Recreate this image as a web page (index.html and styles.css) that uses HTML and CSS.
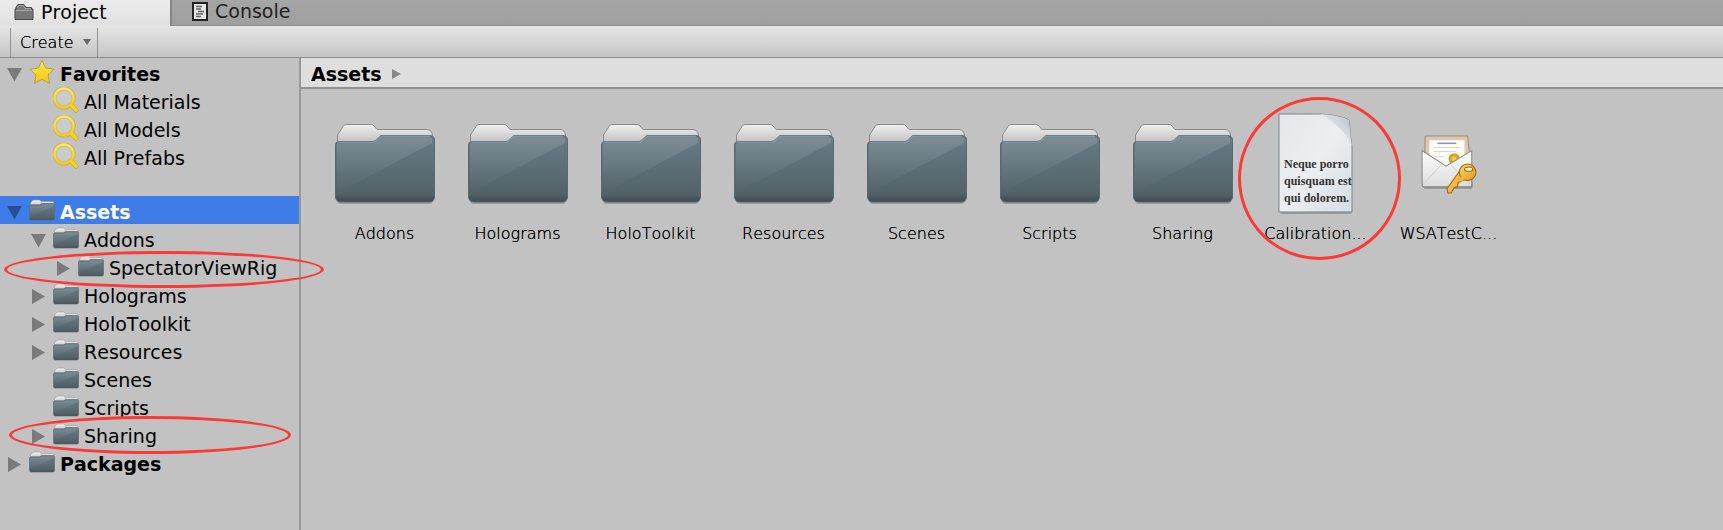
FILE: index.html
```html
<!DOCTYPE html>
<html lang="en">
<head>
<meta charset="utf-8">
<title>Project</title>
<link rel="stylesheet" href="styles.css">
</head>
<body>
<svg class="defs" aria-hidden="true">
  <defs>
    <linearGradient id="front" x1="0" y1="0" x2="0" y2="1"><stop offset="0" stop-color="#6c7d85"/><stop offset=".2" stop-color="#637680"/><stop offset=".88" stop-color="#536268"/><stop offset="1" stop-color="#3d4a51"/></linearGradient>
    <linearGradient id="back" x1="0" y1="0" x2="0" y2="1"><stop offset="0" stop-color="#f0f0f0"/><stop offset="1" stop-color="#b4b4b4"/></linearGradient>
    <linearGradient id="shine" x1="0" y1="0" x2="0" y2="1"><stop offset="0" stop-color="#fff" stop-opacity=".13"/><stop offset="1" stop-color="#fff" stop-opacity="0"/></linearGradient>
    <linearGradient id="gold" x1="0" y1="0" x2="0" y2="1"><stop offset="0" stop-color="#ffe94a"/><stop offset="1" stop-color="#fac80a"/></linearGradient>
    <linearGradient id="paper" x1="0" y1="0" x2="1" y2="1"><stop offset="0" stop-color="#e4e7ea"/><stop offset=".5" stop-color="#eceff1"/><stop offset="1" stop-color="#d5dce2"/></linearGradient>
    <linearGradient id="curl" x1="1" y1="0" x2=".35" y2=".65"><stop offset="0" stop-color="#b3bec6"/><stop offset="1" stop-color="#e9edf0"/></linearGradient>
    <linearGradient id="envelope" x1="0" y1="0" x2="0" y2="1"><stop offset="0" stop-color="#fff"/><stop offset="1" stop-color="#dcdcdc"/></linearGradient>
    <linearGradient id="brass" x1="0" y1="0" x2="1" y2="1"><stop offset="0" stop-color="#ffd768"/><stop offset="1" stop-color="#e59a1c"/></linearGradient>
    <symbol id="folder" viewBox="0 0 102 82">
      <rect x="3" y="73" width="96" height="8" rx="4" fill="#000" opacity=".18"/>
      <path d="M3.500 24V12L9 3.500Q10 1.500 12 1.500H37Q39 1.500 40 3L43 6.500H93Q98.500 7 98.500 13V24Z" fill="url(#back)" stroke="#8b8b8b"/>
      <path d="M1.500 22Q1.500 18.500 5 18.500H39Q41 18.500 43 16L45 14Q46 12.500 48 12.500H96Q100.500 13 100.500 17V74Q100 79 95.500 79H7Q2 79 1.500 74Z" fill="url(#front)" stroke="#5b686e"/>
      <path d="M4 19.500H40L46 14Q47 13.500 48 13.500H96" fill="none" stroke="#8195a0" stroke-width="2"/>
      <path d="M3 21H40L47 15H98V20L3 70Z" fill="url(#shine)"/>
    </symbol>
    <symbol id="folder-small" viewBox="0 0 26 22">
      <path d="M1.500 10V4L3.500 1.500Q4 1 5 1H10.500Q11.500 1 12 2.500H23.500Q25 2.500 25 4V10Z" fill="url(#back)" stroke="#999" stroke-width=".6"/>
      <path d="M.5 7Q.5 5.800 2 5.800H10.500L12.500 4.500H24Q25.500 4.500 25.500 6V19.500Q25.500 21 24 21H2Q.5 21 .5 19.500Z" fill="url(#front)" stroke="#606d73" stroke-width=".7"/>
      <path d="M1 7H11L13 5.500H25V7L1 18Z" fill="url(#shine)"/>
    </symbol>
    <symbol id="magnifier" viewBox="0 0 26 26">
      <path d="M18 18L23 23" stroke="#8c8c6a" stroke-width="5" stroke-linecap="round" opacity=".6"/>
      <circle cx="11" cy="11" r="9.500" fill="none" stroke="#9a905a" stroke-width="4" opacity=".5"/>
      <circle cx="11" cy="11" r="9.500" fill="#fff" fill-opacity=".15" stroke="url(#gold)" stroke-width="2.600"/>
      <path d="M18 18L23 23" stroke="#fbcf12" stroke-width="4" stroke-linecap="round"/>
    </symbol>
    <symbol id="open" viewBox="0 0 15 15"><path d="M0 1H15L7.500 14.500Z" fill="currentColor"/></symbol>
    <symbol id="closed" viewBox="0 0 15 15"><path d="M1 0L14 7.500L1 15Z" fill="currentColor"/></symbol>
  </defs>
</svg>

<div class="window">
  <div class="tabs" role="tablist">
    <button class="tab tab-active" role="tab" aria-selected="true">
      <svg class="tab-icon-folder" viewBox="0 0 20 18"><path d="M1 16.500V6H2V4L4 1.500H10L12 4.500H17.500V6H19V16.500Z" fill="#777" stroke="#4a4a4a"/><path d="M3 5L5 2.500H9.500L11 5.500H17M2 7.500H18" fill="none" stroke="#a8a8a8"/></svg>
      Project
    </button>
    <button class="tab" role="tab" aria-selected="false">
      <svg class="tab-icon-page" viewBox="0 0 16 19"><rect x="1" y="1" width="14" height="17" fill="#e6e6e6" stroke="#222" stroke-width="2"/><path d="M4 4.500H10M4 7H9M6 9.500H12M4 12H11M4 14.500H9" stroke="#666" stroke-width="1.300"/></svg>
      Console
    </button>
  </div>
  <div class="toolbar">
    <button class="create">Create <svg class="caret" viewBox="0 0 8 6"><path d="M0 0H8L4 6Z" fill="#666"/></svg></button>
  </div>
  <div class="body">
    <nav class="sidebar" aria-label="Folders">
      <ul class="tree">
        <li>
          <div class="row root"><button class="toggle" aria-label="Collapse Favorites"><svg><use href="#open"/></svg></button>
            <svg class="icon star" viewBox="0 0 26 26"><path d="M13 1.500L16.600 9L25 10.200L19 16L20.500 24.300L13 20.300L5.500 24.300L7 16L1 10.200L9.400 9Z" fill="url(#gold)" stroke="#b0a150" stroke-width="1"/></svg>Favorites</div>
          <ul>
            <li class="row"><span class="toggle"></span><svg class="icon lens"><use href="#magnifier"/></svg>All Materials</li>
            <li class="row"><span class="toggle"></span><svg class="icon lens"><use href="#magnifier"/></svg>All Models</li>
            <li class="row"><span class="toggle"></span><svg class="icon lens"><use href="#magnifier"/></svg>All Prefabs</li>
          </ul>
        </li>
        <li class="project">
          <div class="row root selected"><button class="toggle" aria-label="Collapse Assets"><svg><use href="#open"/></svg></button><svg class="icon"><use href="#folder-small"/></svg>Assets</div>
          <ul>
            <li>
              <div class="row"><button class="toggle" aria-label="Collapse Addons"><svg><use href="#open"/></svg></button><svg class="icon"><use href="#folder-small"/></svg>Addons</div>
              <ul>
                <li class="row"><button class="toggle" aria-label="Expand SpectatorViewRig"><svg><use href="#closed"/></svg></button><svg class="icon"><use href="#folder-small"/></svg>SpectatorViewRig<span class="mark mark-rig"></span></li>
              </ul>
            </li>
            <li class="row"><button class="toggle" aria-label="Expand Holograms"><svg><use href="#closed"/></svg></button><svg class="icon"><use href="#folder-small"/></svg>Holograms</li>
            <li class="row"><button class="toggle" aria-label="Expand HoloToolkit"><svg><use href="#closed"/></svg></button><svg class="icon"><use href="#folder-small"/></svg>HoloToolkit</li>
            <li class="row"><button class="toggle" aria-label="Expand Resources"><svg><use href="#closed"/></svg></button><svg class="icon"><use href="#folder-small"/></svg>Resources</li>
            <li class="row"><span class="toggle"></span><svg class="icon"><use href="#folder-small"/></svg>Scenes</li>
            <li class="row"><span class="toggle"></span><svg class="icon"><use href="#folder-small"/></svg>Scripts</li>
            <li class="row"><button class="toggle" aria-label="Expand Sharing"><svg><use href="#closed"/></svg></button><svg class="icon"><use href="#folder-small"/></svg>Sharing<span class="mark mark-sharing"></span></li>
          </ul>
          <div class="row root"><button class="toggle" aria-label="Expand Packages"><svg><use href="#closed"/></svg></button><svg class="icon"><use href="#folder-small"/></svg>Packages</div>
        </li>
      </ul>
    </nav>
    <main class="content">
      <div class="breadcrumb">Assets <svg class="crumb" viewBox="0 0 9 10"><path d="M0 0L9 5L0 10Z" fill="#888"/></svg></div>
      <ul class="grid">
        <li class="item"><span class="art"><svg class="folder"><use href="#folder"/></svg></span>Addons</li>
        <li class="item"><span class="art"><svg class="folder"><use href="#folder"/></svg></span>Holograms</li>
        <li class="item"><span class="art"><svg class="folder"><use href="#folder"/></svg></span>HoloToolkit</li>
        <li class="item"><span class="art"><svg class="folder"><use href="#folder"/></svg></span>Resources</li>
        <li class="item"><span class="art"><svg class="folder"><use href="#folder"/></svg></span>Scenes</li>
        <li class="item"><span class="art"><svg class="folder"><use href="#folder"/></svg></span>Scripts</li>
        <li class="item"><span class="art"><svg class="folder"><use href="#folder"/></svg></span>Sharing</li>
        <li class="item"><span class="art"><svg class="page" viewBox="0 0 76 102">
          <rect x="2" y="95" width="72" height="6" rx="2" opacity=".2"/>
          <path d="M1 1H42Q62 2 71 7Q72 20 74 34V99H1Z" fill="url(#paper)" stroke="#7d858a"/>
          <path d="M42 1Q62 2 71 7Q72 20 74 34Q68 16 42 1Z" fill="url(#curl)"/>
          <g class="page-text"><text x="6" y="55">Neque porro</text><text x="6" y="72">quisquam est</text><text x="6" y="89">qui dolorem.</text></g>
        </svg></span>Calibration...<span class="mark mark-file"></span></li>
        <li class="item"><span class="art"><svg class="cert" viewBox="0 0 56 58">
          <rect x="3" y="45" width="48" height="8" rx="3" opacity=".25"/>
          <path d="M5 2H46L48 20V40H4Z" fill="#d9c9b4" stroke="#9b8c7a"/>
          <path d="M9 6H43V40H9Z" fill="#fdfcf6"/>
          <path d="M17 9H35" stroke="#8795c4" stroke-width="1.500"/><path d="M13 13H39M13 17H35M14 22H23" stroke="#d8d8d8"/>
          <circle cx="33" cy="24" r="4" fill="#efcd52" stroke="#d3a51f" stroke-width="3"/>
          <path d="M2 16L25 31L50 16V49Q50 51 48 51H4Q2 51 2 49Z" fill="url(#envelope)" stroke="#8a8a8a"/>
          <path d="M3 49L21 29M49 49L29 29" stroke="#d0d0d0" fill="none"/>
          <path d="M38 36L26 53L27 57H30L33 52L36 51L37 47L43 44Z" fill="url(#brass)" stroke="#9c6513"/>
          <circle cx="46" cy="37" r="8" fill="url(#brass)" stroke="#9c6513"/><path d="M39 41L44 43L40 46L36 45Z" fill="#f2b442"/><ellipse cx="47" cy="34" rx="4" ry="2" fill="#fff1cd" stroke="#9c6513"/>
        </svg></span>WSATestC...</li>
      </ul>
    </main>
  </div>
</div>
</body>
</html>
```
FILE: styles.css
```css
* { box-sizing: border-box; }
body {
  margin: 0;
  background: #c2c2c2;
  color: #000;
  font-family: "DejaVu Sans", Verdana, sans-serif;
  font-size: 19px;
  font-kerning: none;
}
ul { list-style: none; margin: 0; padding: 0; }
button { font: inherit; font-kerning: none; color: inherit; background: none; border: 0; padding: 0; }
.defs { position: absolute; width: 0; height: 0; }
.window { min-height: 100vh; display: flex; flex-direction: column; }

.tabs { display: flex; height: 26px; background: linear-gradient(#a5a5a5, #9f9f9f); border-bottom: 1px solid #8f8f8f; }
.tab { display: flex; align-items: center; padding: 0 20px 3px; color: #222; }
.tab-active {
  width: 172px;
  height: 26px;
  padding: 0 0 3px 14px;
  color: #000;
  background: linear-gradient(#ececec, #e0e0e0);
  border-right: 2px solid #868686;
}
.tab svg { flex: none; margin-right: 7px; }
.tab-icon-folder { width: 20px; height: 18px; }
.tab-icon-page { width: 16px; height: 19px; }

.toolbar {
  display: flex;
  height: 32px;
  padding: 2px 10px 0;
  background: linear-gradient(#e6e6e6, #c4c4c4);
  border-bottom: 1px solid #8c8c8c;
}
.create {
  display: flex;
  align-items: center;
  gap: 9px;
  padding: 0 6px 0 9px;
  font-size: 16px;
  font-weight: 200;
  text-shadow: 0 0 0 #000;
  border: solid #939393;
  border-width: 0 1px;
}
.caret { width: 8px; height: 6px; margin-bottom: 2px; }

.body { display: flex; flex: 1; }
.sidebar { flex: none; width: 301px; padding-top: 2px; border-right: 2px solid #999; }
.row { position: relative; display: flex; align-items: center; height: 28px; padding-left: 31px; }
.root { padding-left: 7px; font-weight: 700; }
.tree ul ul .row { padding-left: 56px; }
.project { margin-top: 24px; }
.project .row { padding-top: 4px; }
.selected { background: #3e7de7; color: #fff; }
.toggle { display: flex; width: 15px; height: 15px; margin-right: 7px; color: #7a7a7a; }
.selected .toggle { color: #284f91; }
.toggle svg { width: 15px; height: 15px; }
.icon { width: 26px; height: 22px; margin: 0 5px 4px 0; }
.star, .lens { height: 26px; }

.mark { position: absolute; z-index: 1; border: 3px solid #fb3a36; border-radius: 50%; pointer-events: none; }
.mark-rig { left: 4px; top: -1px; width: 320px; height: 37px; }
.mark-sharing { left: 9px; top: -4px; width: 282px; height: 38px; }
.mark-file { left: -11px; top: -7px; width: 163px; height: 163px; }

.content { flex: 1; min-width: 0; }
.breadcrumb {
  display: flex;
  align-items: center;
  gap: 10px;
  height: 31px;
  padding: 2px 0 0 10px;
  font-weight: 700;
  background: #dedede;
  border-bottom: 2px solid #909090;
}
.crumb { width: 9px; height: 10px; }
.grid { display: grid; grid-template-columns: repeat(auto-fill, 133px); padding: 15px 17px; }
.item {
  position: relative;
  display: flex;
  flex-direction: column;
  align-items: center;
  font-size: 16px;
  font-weight: 200;
  line-height: 20px;
  text-shadow: 0 0 0 #000;
}
.art { display: flex; align-items: center; justify-content: center; height: 120px; }
.folder { width: 102px; height: 82px; }
.page { width: 76px; height: 102px; }
.page-text { font: 700 12px "Liberation Serif", serif; fill: #333; text-shadow: none; }
.cert { width: 58px; height: 60px; }
```
